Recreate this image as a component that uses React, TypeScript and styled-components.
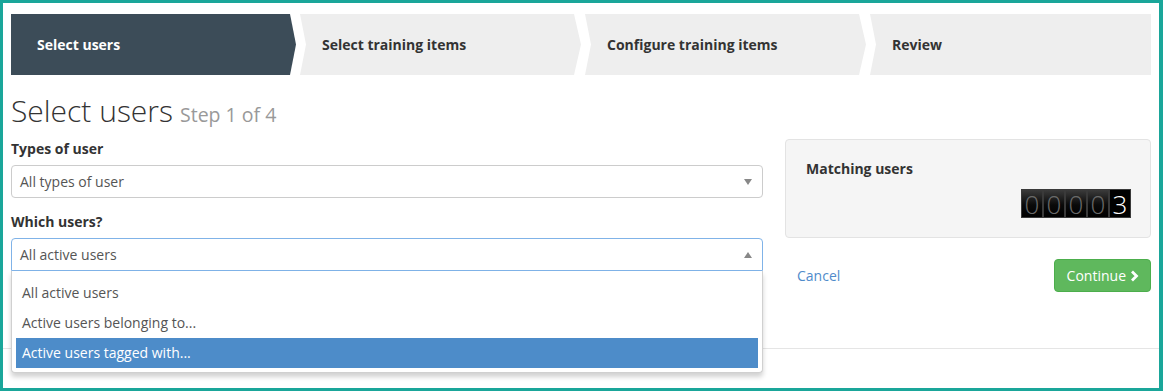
import styled, { createGlobalStyle } from "styled-components";

const GlobalStyle = createGlobalStyle`
  html, body {
    margin: 0;
    padding: 0;
    background: #fff;
  }
  body {
    font-family: "Open Sans", "Liberation Sans", Arial, sans-serif;
    font-size: 14px;
    color: #333;
  }
  * {
    box-sizing: border-box;
  }
`;

const Frame = styled.div`
  width: 1163px;
  height: 391px;
  border: solid #1aa69a;
  border-width: 3px 4px 3px 3px;
  overflow: hidden;
  background: #fff;
`;

const Content = styled.div`
  padding: 11px 8px 0 8px;
`;

const Steps = styled.div`
  display: flex;
  gap: 4px;
  height: 61px;
`;

type StepKind = "first" | "middle" | "last";

const clips: Record<StepKind, string> = {
  first:
    "polygon(0 0, calc(100% - 6px) 0, 100% 50%, calc(100% - 6px) 100%, 0 100%)",
  middle:
    "polygon(0 0, calc(100% - 7px) 0, 100% 50%, calc(100% - 7px) 100%, 0 100%, 6px 50%)",
  last: "polygon(0 0, 100% 0, 100% 100%, 0 100%, 6px 50%)",
};

const Step = styled.div<{ $active?: boolean; $kind: StepKind }>`
  flex: ${(p) => (p.$kind === "first" ? "0 0 285px" : "1 1 0")};
  display: flex;
  align-items: center;
  padding-left: ${(p) => (p.$kind === "first" ? "26px" : "22px")};
  background: ${(p) => (p.$active ? "#3c4c58" : "#eeeeee")};
  color: ${(p) => (p.$active ? "#fff" : "#333")};
  font-weight: 700;
  font-size: 14px;
  clip-path: ${(p) => clips[p.$kind]};
`;

const Title = styled.h1`
  margin: 19px 0 0;
  font-size: 30px;
  line-height: 34px;
  font-weight: 300;
  color: #333;
`;

const StepCount = styled.small`
  font-size: 19.5px;
  line-height: 1;
  font-weight: 400;
  color: #999;
  margin-left: 7px;
`;

const Columns = styled.div`
  display: grid;
  grid-template-columns: 752px 1fr;
  column-gap: 22px;
  margin-top: 11px;
  align-items: start;
`;

const FormGroup = styled.div`
  margin-bottom: 14px;
  &:last-child {
    margin-bottom: 0;
  }
`;

const Label = styled.label`
  display: block;
  font-weight: 700;
  line-height: 20px;
  margin-bottom: 6px;
`;

const SelectWrap = styled.div`
  position: relative;
`;

const SelectBox = styled.div<{ $open?: boolean }>`
  display: flex;
  align-items: center;
  height: 33px;
  padding: 0 10px 0 8px;
  border: 1px solid ${(p) => (p.$open ? "#80b3e8" : "#ccc")};
  border-radius: ${(p) => (p.$open ? "4px 4px 0 0" : "4px")};
  color: #555;
  background: #fff;
`;

const Caret = styled.span<{ $up?: boolean }>`
  margin-left: auto;
  width: 0;
  height: 0;
  border-left: 4px solid transparent;
  border-right: 4px solid transparent;
  ${(p) =>
    p.$up ? "border-bottom: 6px solid #888;" : "border-top: 6px solid #888;"}
`;

const Dropdown = styled.ul`
  position: absolute;
  top: 100%;
  left: 0;
  right: 0;
  margin: 0;
  padding: 7px 4px 4px;
  list-style: none;
  background: #fff;
  border: 1px solid #d0d0d0;
  border-top: none;
  border-radius: 0 0 4px 4px;
  box-shadow: 0 4px 5px rgba(0, 0, 0, 0.18);
  z-index: 5;
`;

const Option = styled.li<{ $highlighted?: boolean }>`
  height: 30px;
  line-height: 30px;
  padding-left: 6px;
  color: ${(p) => (p.$highlighted ? "#fff" : "#555")};
  background: ${(p) => (p.$highlighted ? "#4d8cc9" : "transparent")};
`;

const Panel = styled.div`
  background: #f5f5f5;
  border: 1px solid #e3e3e3;
  border-radius: 4px;
  padding: 19px 19px 19px 20px;
`;

const PanelTitle = styled.div`
  font-weight: 700;
  line-height: 20px;
`;

const CounterRow = styled.div`
  display: flex;
  justify-content: flex-end;
  margin-top: 10px;
`;

const Counter = styled.div`
  display: flex;
  height: 29px;
  background: #000;
`;

const Digit = styled.span<{ $lit?: boolean }>`
  width: 22px;
  height: 29px;
  display: flex;
  align-items: center;
  justify-content: center;
  border: 1px solid #3a3a3a;
  background: ${(p) =>
    p.$lit ? "#000" : "linear-gradient(#3b3b3b, #0a0a0a 55%, #000)"};
  color: ${(p) => (p.$lit ? "#fff" : "#6a6a6a")};
  font-size: 26px;
  font-weight: 300;
  line-height: 1;
`;

const Actions = styled.div`
  display: flex;
  justify-content: space-between;
  align-items: center;
  margin-top: 21px;
`;

const LinkButton = styled.a`
  padding: 0 12px;
  color: #4f8bcb;
  text-decoration: none;
  line-height: 33px;
`;

const SuccessButton = styled.button`
  display: flex;
  align-items: center;
  gap: 4px;
  height: 33px;
  padding: 0 11px 0 12px;
  background: #5fb85d;
  border: 1px solid #4cae4c;
  border-radius: 4px;
  color: #fff;
  font-family: inherit;
  font-size: 14px;
`;

const FooterRule = styled.div`
  height: 1px;
  margin-top: 56px;
  background: #e5e5e5;
`;

const Chevron = () => (
  <svg width="9" height="12" viewBox="0 0 9 12">
    <path
      d="M2 1.5 L6.5 6 L2 10.5"
      fill="none"
      stroke="#fff"
      strokeWidth="2.8"
      strokeLinejoin="miter"
    />
  </svg>
);

const steps = [
  "Select users",
  "Select training items",
  "Configure training items",
  "Review",
];

const options = [
  "All active users",
  "Active users belonging to...",
  "Active users tagged with...",
];

export default function App() {
  return (
    <>
      <GlobalStyle />
      <Frame>
        <Content>
          <Steps>
            {steps.map((s, i) => (
              <Step
                key={s}
                $active={i === 0}
                $kind={i === 0 ? "first" : i === steps.length - 1 ? "last" : "middle"}
              >
                {s}
              </Step>
            ))}
          </Steps>

          <Title>
            Select users<StepCount>Step 1 of 4</StepCount>
          </Title>

          <Columns>
            <div>
              <FormGroup>
                <Label>Types of user</Label>
                <SelectBox>
                  All types of user
                  <Caret />
                </SelectBox>
              </FormGroup>
              <FormGroup>
                <Label>Which users?</Label>
                <SelectWrap>
                  <SelectBox $open>
                    All active users
                    <Caret $up />
                  </SelectBox>
                  <Dropdown>
                    {options.map((o, i) => (
                      <Option key={o} $highlighted={i === 2}>
                        {o}
                      </Option>
                    ))}
                  </Dropdown>
                </SelectWrap>
              </FormGroup>
            </div>

            <div>
              <Panel>
                <PanelTitle>Matching users</PanelTitle>
                <CounterRow>
                  <Counter>
                    {"00003".split("").map((d, i) => (
                      <Digit key={i} $lit={i === 4}>
                        {d}
                      </Digit>
                    ))}
                  </Counter>
                </CounterRow>
              </Panel>
              <Actions>
                <LinkButton href="#">Cancel</LinkButton>
                <SuccessButton>
                  Continue
                  <Chevron />
                </SuccessButton>
              </Actions>
            </div>
          </Columns>
        </Content>
        <FooterRule />
      </Frame>
    </>
  );
}
